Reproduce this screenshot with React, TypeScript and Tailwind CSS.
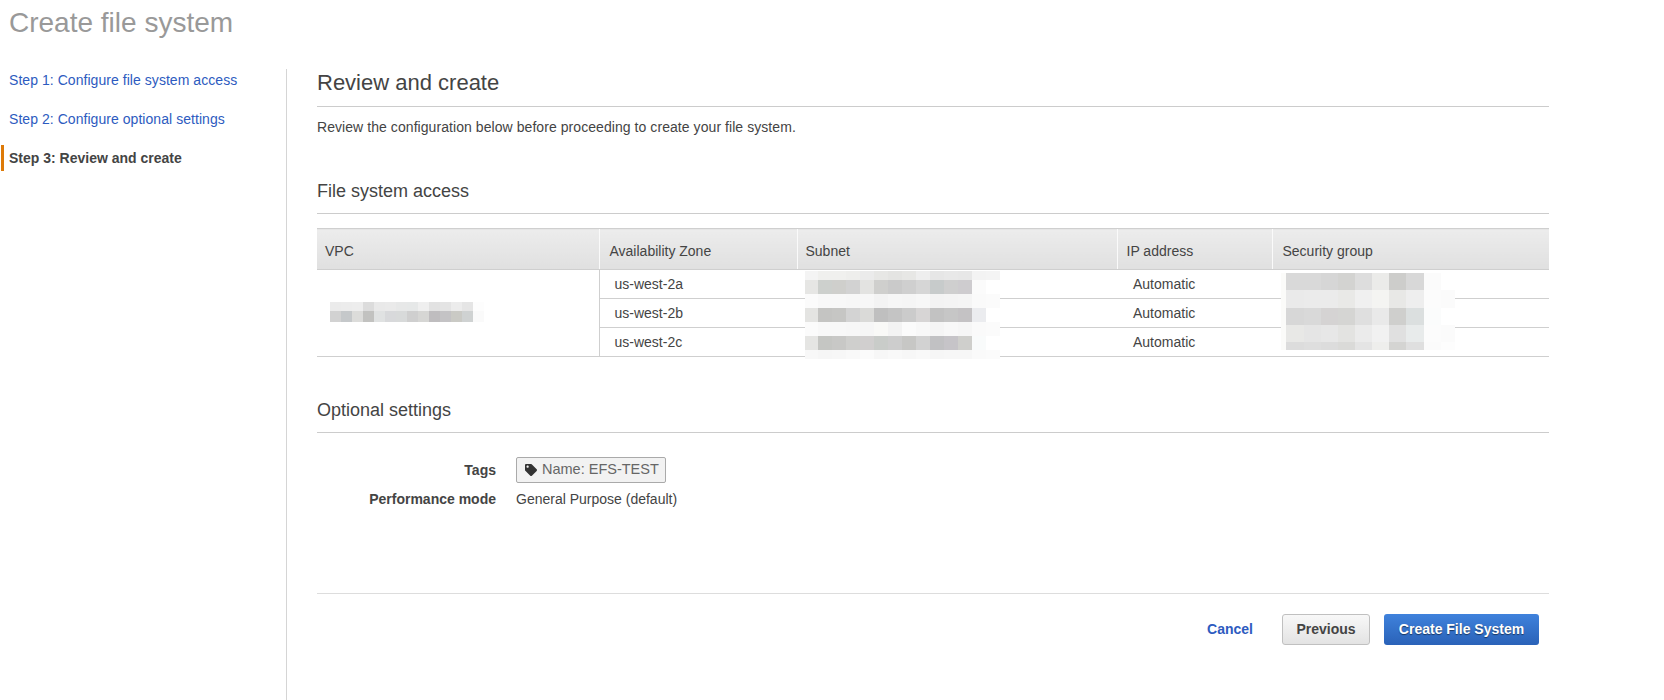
import React from "react";
import { FaTag } from "react-icons/fa";

type Pixelated = { widths: number[]; rows: { h: number; c: string[] }[] };

const vpc: Pixelated = {
  widths: [11, 11, 11, 11, 11, 11, 11, 11, 11, 11, 11, 11, 11, 11, 11],
  rows: [
    { h: 9, c: ["#ebebeb", "#ececec", "#ededed", "#dcdcdc", "#e9e9e9", "#eaeaea", "#e7e8e8", "#e6e8e8", "#efefef", "#e2e2e2", "#e4e4e4", "#ececec", "#e5e5e5", "#fdfdfd", "#ffffff"] },
    { h: 11, c: ["#d2d2d2", "#c5c8ca", "#dcdcda", "#c2c2c0", "#e0e2e2", "#d8d9db", "#d8dada", "#cfcfcf", "#d6d6d4", "#bfbdbf", "#c4c3c5", "#cacac5", "#cfd2d2", "#fafafa", "#ffffff"] },
  ],
};

const subnet: Pixelated = {
  widths: [13, 14, 14, 14, 14, 14, 14, 14, 14, 14, 14, 14, 14, 14],
  rows: [
    { h: 9, c: ["#f4f4f4", "#f0f0ee", "#f0f0ee", "#eeeeec", "#ebebeb", "#e7e7e5", "#e4e4e2", "#e7e7e5", "#eeeeee", "#e6e6e6", "#e8e8e8", "#e7e7e7", "#f3f3f3", "#f4f4f4"] },
    { h: 14, c: ["#e6e6e4", "#cdd0cd", "#cfcfcc", "#d2d2d2", "#e3e3e1", "#cfcfcd", "#cacaca", "#cfcfcf", "#d6d6d6", "#c7cbcb", "#cfcfcf", "#cecccf", "#fbfbfb", "#ffffff"] },
    { h: 14, c: ["#fbfbfb", "#f8f8f8", "#f8f8f8", "#f7f7f7", "#f7f7f7", "#f3f3f3", "#f6f6f6", "#f5f5f5", "#f7f7f7", "#f3f3f3", "#f4f4f4", "#f5f5f5", "#fafafa", "#fbfbfb"] },
    { h: 14, c: ["#e4e4e2", "#c4c4c2", "#c6c6c4", "#d3d3d3", "#dadad8", "#bfbfbf", "#c4c4c4", "#cbcbcb", "#d7d5d5", "#c2c2c2", "#c6c6c6", "#c4c2c4", "#ebecef", "#ffffff"] },
    { h: 14, c: ["#fbfbfb", "#f8f8f8", "#f8f8f8", "#f7f7f7", "#f6f6f6", "#f9f9f7", "#f3f3f3", "#fbfbfb", "#f8f8f8", "#f5f5f5", "#f8f8f8", "#f6f6f6", "#fafafa", "#fbfbfb"] },
    { h: 14, c: ["#e5e5e3", "#c5c6c3", "#c8c8c6", "#cfcfcd", "#d1cfcf", "#c9ccc9", "#cdcdcd", "#c7c7c5", "#d2d2d2", "#c1c1c3", "#c6c4c8", "#cfcfcc", "#f9fbfb", "#ffffff"] },
    { h: 9, c: ["#f8f8f8", "#f6f6f6", "#f7f7f7", "#f9f9f9", "#fbfbfb", "#f7f7f7", "#f9f9f9", "#f7f7f7", "#f9f9f9", "#f6f6f6", "#f7f7f7", "#f7f7f7", "#fafafa", "#fbfbfb"] },
  ],
};

const sg: Pixelated = {
  widths: [5, 18, 17, 17, 17, 17, 17, 17, 18, 17, 14],
  rows: [
    { h: 17, c: ["#fbfbf9", "#d9d9d9", "#d9d9d9", "#d6d6d6", "#d3d3d1", "#dddddd", "#ebebe9", "#cdcdcb", "#d8d8d8", "#fbfbfb", "#ffffff"] },
    { h: 18, c: ["#fbfbf9", "#eaeaea", "#ebebeb", "#ebebeb", "#e9e9e7", "#f0f0f0", "#f4f4f2", "#e8e8e6", "#eeeeee", "#fcfcfc", "#fbfbfb"] },
    { h: 17, c: ["#fbfbf9", "#d7d7d7", "#d9d9d9", "#d5d3d3", "#d5d5d3", "#dfdfdf", "#e9e9e9", "#cfcfcd", "#dbdfdf", "#fbfcfc", "#ffffff"] },
    { h: 17, c: ["#fbfbf9", "#e8e8e6", "#e5e5e5", "#e7e7e7", "#e3e3e1", "#ebebeb", "#f1f1f1", "#e0e0e0", "#e8ebeb", "#fcfcfc", "#fbfbfb"] },
    { h: 8, c: ["#fbfbf9", "#dcdcdc", "#dedede", "#dcdcdc", "#dadad8", "#e4e4e4", "#eeeeec", "#d4d4d2", "#dfdfdf", "#fbfbfb", "#fdfdfd"] },
  ],
};

function Blocks({ data }: { data: Pixelated }) {
  return (
    <div className="flex flex-col">
      {data.rows.map((row, r) => (
        <div key={r} className="flex" style={{ height: row.h }}>
          {row.c.map((color, i) => (
            <div key={i} style={{ width: data.widths[i], backgroundColor: color }} />
          ))}
        </div>
      ))}
    </div>
  );
}

const th = "h-[41px] border-t border-b border-[#cfcfcf] bg-gradient-to-b from-[#ececec] to-[#e0e0e0] text-left font-normal align-middle pt-[5px] border-l border-l-[#fafafa]";
const td = "h-[29px] border-b border-[#cfcfcf] p-0 align-middle";

export default function App() {
  return (
    <div className="min-h-[700px] bg-white text-[14px] text-[#444444] font-['Liberation_Sans',Arial,sans-serif]">
      <h1 className="h-[69px] pl-[9px] pt-[8px] text-[28px] leading-[30px] text-[#999999]">Create file system</h1>
      <div className="flex h-[631px]">
        <nav className="flex w-[287px] shrink-0 flex-col border-r border-[#d5d5d5]">
          <a className="flex h-[22px] items-center pl-[9px] tracking-[0.05px] text-[#2d5bc0]">Step 1: Configure file system access</a>
          <a className="mt-[17px] flex h-[22px] items-center pl-[9px] tracking-[0.05px] text-[#2d5bc0]">Step 2: Configure optional settings</a>
          <a className="mt-[15px] ml-[1px] flex h-[26px] items-center border-l-[3px] border-[#dd7a08] pl-[5px] font-bold text-[#444444]">Step 3: Review and create</a>
        </nav>
        <main className="w-[1262px] shrink-0 pl-[30px]">
          <h2 className="mt-[1px] h-[37px] border-b border-[#cccccc] text-[22px] leading-[26px] text-[#444444]">Review and create</h2>
          <p className="mt-[12px] h-[16px] leading-[16px] tracking-[0.065px]">Review the configuration below before proceeding to create your file system.</p>
          <h3 className="mt-[45px] h-[34px] border-b border-[#cccccc] text-[18px] leading-[22px]">File system access</h3>
          <div className="relative mt-[14px]">
            <table className="w-full table-fixed border-collapse">
              <colgroup>
                <col className="w-[282px]" />
                <col className="w-[198px]" />
                <col className="w-[320px]" />
                <col className="w-[155px]" />
                <col />
              </colgroup>
              <thead>
                <tr>
                  <th className={th + " border-l-0 pl-[8px]"}>VPC</th>
                  <th className={th + " pl-[10px]"}>Availability Zone</th>
                  <th className={th + " pl-[8px]"}>Subnet</th>
                  <th className={th + " pl-[9px]"}>IP address</th>
                  <th className={th + " pl-[10px]"}>Security group</th>
                </tr>
              </thead>
              <tbody>
                {["us-west-2a", "us-west-2b", "us-west-2c"].map((zone, i) => (
                  <tr key={zone}>
                    {i === 0 && <td rowSpan={3} className="border-r border-b border-[#cfcfcf]" />}
                    <td className={td + " pl-[15px]"}>{zone}</td>
                    <td className={td} />
                    <td className={td + " pl-[16px]"}>Automatic</td>
                    <td className={td} />
                  </tr>
                ))}
              </tbody>
            </table>
            <div className="absolute left-[13px] top-[74px]"><Blocks data={vpc} /></div>
            <div className="absolute left-[488px] top-[43px]"><Blocks data={subnet} /></div>
            <div className="absolute left-[964px] top-[45px]"><Blocks data={sg} /></div>
          </div>
          <h3 className="mt-[42px] h-[23px] text-[18px] leading-[22px]">Optional settings</h3>
          <div className="mt-[10px] border-t border-[#cccccc]" />
          <div className="mt-[24px] flex items-center gap-[20px]">
            <span className="w-[179px] text-right font-bold">Tags</span>
            <span className="flex h-[26px] w-[150px] items-center gap-[5px] rounded-[2px] border border-[#aaaaaa] bg-[#f2f2f2] pl-[8px] text-[14.5px] text-[#666666]">
              <FaTag className="h-[12px] w-[12px] text-[#333333]" />
              Name: EFS-TEST
            </span>
          </div>
          <div className="mt-[6px] flex items-center gap-[20px]">
            <span className="w-[179px] text-right font-bold">Performance mode</span>
            <span>General Purpose (default)</span>
          </div>
          <div className="mt-[83px] box-content flex h-[31px] items-center justify-end border-t border-[#dddddd] pt-[20px] pr-[10px]">
            <button className="mr-[29px] font-bold text-[#2d5bc0]">Cancel</button>
            <button className="mr-[14px] h-[31px] w-[88px] rounded-[3px] border border-[#c0c0c0] bg-gradient-to-b from-[#f8f8f8] to-[#e3e3e3] font-bold text-[#444444]">Previous</button>
            <button className="h-[31px] w-[155px] rounded-[3px] bg-gradient-to-b from-[#3f82dc] to-[#2a62b8] font-bold text-white [text-shadow:0_1px_1px_rgba(0,0,0,0.5)]">Create File System</button>
          </div>
        </main>
      </div>
    </div>
  );
}
